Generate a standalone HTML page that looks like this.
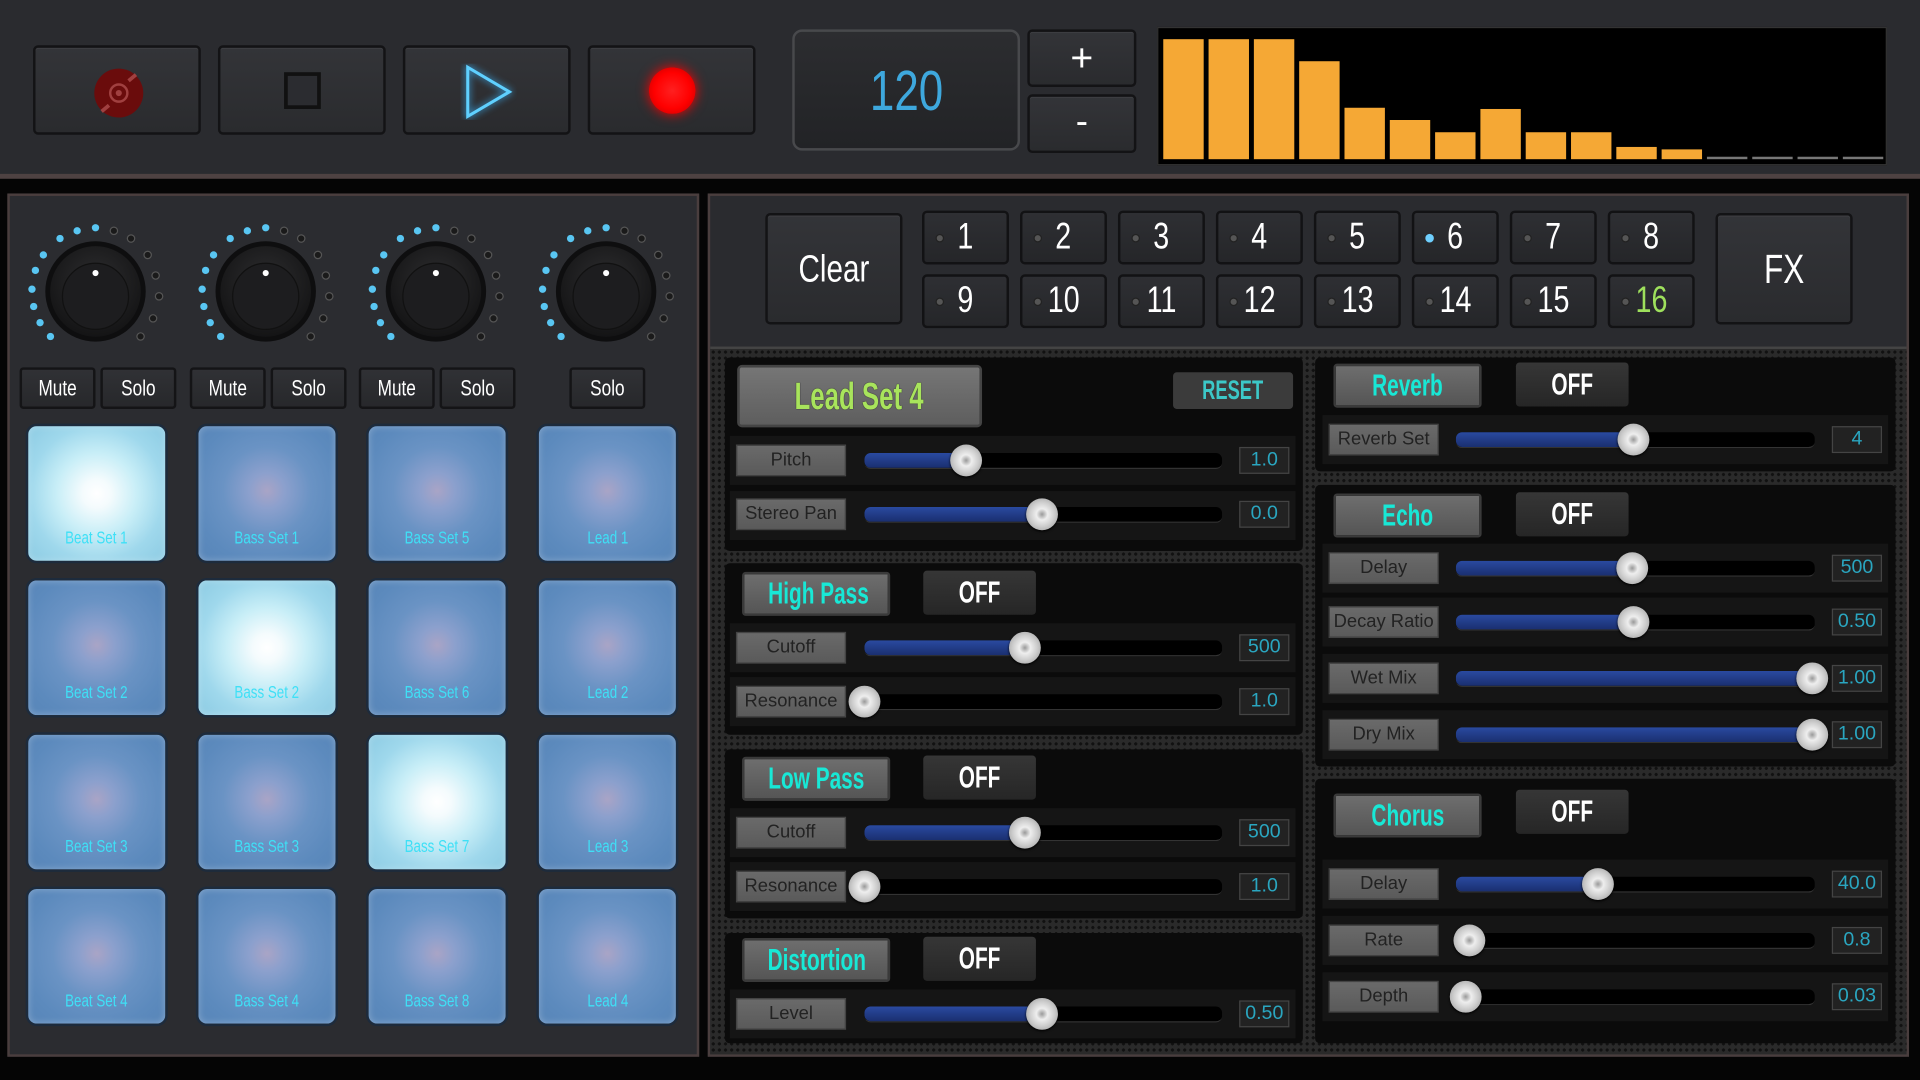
<!DOCTYPE html>
<html><head><meta charset="utf-8"><style>
*{box-sizing:border-box;margin:0;padding:0}
html,body{width:1920px;height:1080px;overflow:hidden;background:#000;font-family:"Liberation Sans",sans-serif}
#s{position:absolute;left:0;top:0;width:1568px;height:882px;transform:scale(1.22449);transform-origin:0 0;background:#050505}
.a{position:absolute}
.n{display:inline-block;transform:scaleX(.78)}
.nb{display:inline-block;transform:scaleX(.68)}
.btn{position:absolute;background:linear-gradient(#333438,#2a2b2e);border:2px solid #131315;border-radius:4px;box-shadow:inset 0 1px 0 #3c3d41}
.ms{position:absolute;top:300px;height:34px;width:62px;background:linear-gradient(#303135,#27282b);border:2px solid #141416;border-radius:3px;color:#fff;font-size:18px;line-height:30px;text-align:center}
.pad{position:absolute;width:116px;height:114px;border:2px solid #1d2b3c;border-radius:9px;background:radial-gradient(circle at 50% 48%,#a9a4c6 0,#8ca0cd 18%,#6a93c4 45%,#5c8abd 75%,#5785b8);color:#3fe0f6;font-size:14px;text-align:center;padding-top:83px;box-shadow:inset 0 0 6px rgba(255,255,255,.3)}
.pad.on{background:radial-gradient(circle at 50% 50%,#fff 0,#f4fbfd 15%,#c8eef7 42%,#9fd8ec 70%,#8ccbe3)}
.st{position:absolute;width:71px;height:44px;background:linear-gradient(#2e2f33,#252629);border:2px solid #121214;border-radius:4px;color:#fff;font-size:30px;text-align:center;line-height:40px}
.st i{position:absolute;left:9px;top:17px;width:7px;height:7px;border-radius:50%;background:#555;border:1px solid #222}
.sec{position:absolute;background:#0b0b0b;border-radius:4px}
.band{position:absolute;background:#151515}
.hd{position:absolute;height:36px;width:121px;background:linear-gradient(#6e6e6e,#555);border:2px solid #3a3a3a;border-radius:3px;color:#18e8d6;font-weight:bold;font-size:25px;text-align:center;line-height:32px;white-space:nowrap}
.off{position:absolute;height:36px;width:92px;background:linear-gradient(#363636,#262626);border-radius:3px;color:#fff;font-weight:bold;font-size:25px;text-align:center;line-height:36px}
.sl{position:absolute;width:452px;height:26px}
.sl .lb{position:absolute;left:0;top:0;width:90px;height:26px;background:linear-gradient(#6a6a6a,#5a5a5a);border:1px solid #444;color:#222;font-size:15px;text-align:center;line-height:24px;white-space:nowrap;overflow:hidden}
.sl .tr{position:absolute;left:105px;top:7px;width:292px;height:13px;background:#000;border-radius:5px;border-bottom:1px solid #333}
.sl .fl{position:absolute;left:0;top:0;height:12px;background:linear-gradient(#2a4aa0,#1a2f70);border-radius:5px}
.sl .th{position:absolute;top:0;width:26px;height:26px;border-radius:50%;background:radial-gradient(circle at 50% 50%,#999 0,#eee 25%,#ccc 55%,#aaa 80%,#888);box-shadow:0 1px 2px #000}
.sl .vb{position:absolute;left:411px;top:2px;width:41px;height:22px;background:#222;border:1px solid #444;color:#2aa6c0;font-size:16px;text-align:center;line-height:20px}
.dot{background-color:#2a2a2a;background-image:radial-gradient(#111 1.2px,transparent 1.4px);background-size:5px 5px}
</style></head><body><div id="s">

<div class="a" style="left:0;top:0;width:1568px;height:144px;background:#2a2b2f"></div>
<div class="a" style="left:0;top:142px;width:1568px;height:4px;background:#4e4242"></div>

<div class="btn" style="left:27px;top:37px;width:137px;height:73px"><svg class="a" style="left:46px;top:15px" width="44" height="44" viewBox="0 0 44 44"><circle cx="22" cy="22" r="20" fill="#6a0c0c"/><circle cx="22" cy="22" r="7" fill="none" stroke="#a04040" stroke-width="2"/><circle cx="22" cy="22" r="2.5" fill="#a04040"/><path d="M30 12l6-5M14 32l-6 5" stroke="#a04040" stroke-width="3"/></svg></div>
<div class="btn" style="left:178px;top:37px;width:137px;height:73px"><div class="a" style="left:52px;top:20px;width:30px;height:30px;border:3px solid #111;background:#2b2c30"></div></div>
<div class="btn" style="left:329px;top:37px;width:137px;height:73px"><svg class="a" style="left:45px;top:13px" width="46" height="46" viewBox="0 0 46 46"><path d="M6 3L40 23L6 43Z" fill="none" stroke="#5fd0ff" stroke-width="2.5" style="filter:drop-shadow(0 0 3px #3ab6ff)"/></svg></div>
<div class="btn" style="left:480px;top:37px;width:137px;height:73px"><div class="a" style="left:48px;top:16px;width:38px;height:38px;border-radius:50%;background:radial-gradient(circle,#ff2020 0,#ff0000 55%,#b00 100%);box-shadow:0 0 10px #f00"></div></div>

<div class="a" style="left:647px;top:24px;width:186px;height:99px;background:linear-gradient(#2c2d30,#222326);border:2px solid #48494c;border-radius:8px;color:#3ea8dd;font-size:46px;text-align:center;line-height:96px"><span class="n">120</span></div>
<div class="btn" style="left:839px;top:24px;width:89px;height:47px;color:#fff;font-size:32px;text-align:center;line-height:42px">+</div>
<div class="btn" style="left:839px;top:77px;width:89px;height:48px;color:#fff;font-size:30px;text-align:center;line-height:42px">-</div>

<div class="a" style="left:945px;top:22px;width:596px;height:113px;background:#000;border:1px solid #333"></div>
<div class="a" style="left:950px;top:32px;width:33px;height:98px;background:#f5a835"></div>
<div class="a" style="left:987px;top:32px;width:33px;height:98px;background:#f5a835"></div>
<div class="a" style="left:1024px;top:32px;width:33px;height:98px;background:#f5a835"></div>
<div class="a" style="left:1061px;top:50px;width:33px;height:80px;background:#f5a835"></div>
<div class="a" style="left:1098px;top:88px;width:33px;height:42px;background:#f5a835"></div>
<div class="a" style="left:1135px;top:98px;width:33px;height:32px;background:#f5a835"></div>
<div class="a" style="left:1172px;top:108px;width:33px;height:22px;background:#f5a835"></div>
<div class="a" style="left:1209px;top:89px;width:33px;height:41px;background:#f5a835"></div>
<div class="a" style="left:1246px;top:108px;width:33px;height:22px;background:#f5a835"></div>
<div class="a" style="left:1283px;top:108px;width:33px;height:22px;background:#f5a835"></div>
<div class="a" style="left:1320px;top:120px;width:33px;height:10px;background:#f5a835"></div>
<div class="a" style="left:1357px;top:122px;width:33px;height:8px;background:#f5a835"></div>
<div class="a" style="left:1394px;top:128px;width:33px;height:2px;background:#777"></div>
<div class="a" style="left:1431px;top:128px;width:33px;height:2px;background:#777"></div>
<div class="a" style="left:1468px;top:128px;width:33px;height:2px;background:#777"></div>
<div class="a" style="left:1505px;top:128px;width:33px;height:2px;background:#777"></div>

<div class="a" style="left:6px;top:158px;width:565px;height:705px;background:#2b2c30;border:2px solid #4a3e3e"></div>
<svg class="a" style="left:0;top:160px" width="570" height="140" viewBox="0 160 570 140">
<defs><radialGradient id="kg" cx="50%" cy="40%" r="60%"><stop offset="0" stop-color="#2e2e30"/><stop offset="1" stop-color="#141415"/></radialGradient>
<g id="kn"><circle r="41" fill="#0e0e0f"/><circle r="37" fill="url(#kg)"/><circle cy="4" r="27" fill="#1d1d1f" stroke="#111"/><circle cy="-15" r="2.5" fill="#fff"/>
<g fill="#59c6f2"><circle cx="-36.8" cy="36.8" r="3"/><circle cx="-45.3" cy="25.5" r="3"/><circle cx="-50.5" cy="12.3" r="3"/><circle cx="-51.9" cy="-1.8" r="3"/><circle cx="-49.1" cy="-17.2" r="3"/><circle cx="-42.6" cy="-29.8" r="3"/><circle cx="-29" cy="-43.2" r="3"/><circle cx="0" cy="-52" r="3"/><circle cx="-15" cy="-49.5" r="3"/></g>
<g fill="#1a1a1a" stroke="#555" stroke-width="1"><circle cx="15" cy="-49.5" r="3"/><circle cx="29" cy="-43.2" r="3"/><circle cx="42.6" cy="-29.8" r="3"/><circle cx="49.1" cy="-13" r="3"/><circle cx="51.9" cy="4" r="3"/><circle cx="47" cy="22" r="3"/><circle cx="36.8" cy="36.8" r="3"/></g></g></defs>
<use href="#kn" x="78" y="238"/><use href="#kn" x="217" y="238"/><use href="#kn" x="356" y="238"/><use href="#kn" x="495" y="238"/>
</svg>
<div class="ms" style="left:16px"><span class="n">Mute</span></div><div class="ms" style="left:82px"><span class="n">Solo</span></div>
<div class="ms" style="left:155px"><span class="n">Mute</span></div><div class="ms" style="left:221px"><span class="n">Solo</span></div>
<div class="ms" style="left:293px"><span class="n">Mute</span></div><div class="ms" style="left:359px"><span class="n">Solo</span></div>
<div class="ms" style="left:465px"><span class="n">Solo</span></div>

<div class="pad on" style="left:21px;top:346px"><span class="n">Beat Set 1</span></div>
<div class="pad" style="left:160px;top:346px"><span class="n">Bass Set 1</span></div>
<div class="pad" style="left:299px;top:346px"><span class="n">Bass Set 5</span></div>
<div class="pad" style="left:438px;top:346px"><span class="n">Lead 1</span></div>
<div class="pad" style="left:21px;top:472px"><span class="n">Beat Set 2</span></div>
<div class="pad on" style="left:160px;top:472px"><span class="n">Bass Set 2</span></div>
<div class="pad" style="left:299px;top:472px"><span class="n">Bass Set 6</span></div>
<div class="pad" style="left:438px;top:472px"><span class="n">Lead 2</span></div>
<div class="pad" style="left:21px;top:598px"><span class="n">Beat Set 3</span></div>
<div class="pad" style="left:160px;top:598px"><span class="n">Bass Set 3</span></div>
<div class="pad on" style="left:299px;top:598px"><span class="n">Bass Set 7</span></div>
<div class="pad" style="left:438px;top:598px"><span class="n">Lead 3</span></div>
<div class="pad" style="left:21px;top:724px"><span class="n">Beat Set 4</span></div>
<div class="pad" style="left:160px;top:724px"><span class="n">Bass Set 4</span></div>
<div class="pad" style="left:299px;top:724px"><span class="n">Bass Set 8</span></div>
<div class="pad" style="left:438px;top:724px"><span class="n">Lead 4</span></div>

<div class="a" style="left:578px;top:158px;width:981px;height:705px;background:#2a2b2f;border:2px solid #4a3e3e"></div>
<div class="a dot" style="left:580px;top:283px;width:977px;height:578px;border-top:2px solid #444"></div>
<div class="btn" style="left:625px;top:174px;width:112px;height:91px;color:#fff;font-size:31px;text-align:center;line-height:87px"><span class="n">Clear</span></div>
<div class="st" style="left:753px;top:172px"><i></i><span class="n">1</span></div><div class="st" style="left:833px;top:172px"><i></i><span class="n">2</span></div><div class="st" style="left:913px;top:172px"><i></i><span class="n">3</span></div><div class="st" style="left:993px;top:172px"><i></i><span class="n">4</span></div><div class="st" style="left:1073px;top:172px"><i></i><span class="n">5</span></div><div class="st" style="left:1153px;top:172px"><i style="background:#6fd0ff;border-color:#6fd0ff"></i><span class="n">6</span></div><div class="st" style="left:1233px;top:172px"><i></i><span class="n">7</span></div><div class="st" style="left:1313px;top:172px"><i></i><span class="n">8</span></div>
<div class="st" style="left:753px;top:224px"><i></i><span class="n">9</span></div><div class="st" style="left:833px;top:224px"><i></i><span class="n">10</span></div><div class="st" style="left:913px;top:224px"><i></i><span class="n">11</span></div><div class="st" style="left:993px;top:224px"><i></i><span class="n">12</span></div><div class="st" style="left:1073px;top:224px"><i></i><span class="n">13</span></div><div class="st" style="left:1153px;top:224px"><i></i><span class="n">14</span></div><div class="st" style="left:1233px;top:224px"><i></i><span class="n">15</span></div><div class="st" style="left:1313px;top:224px;color:#9ee05c"><i></i><span class="n">16</span></div>
<div class="btn" style="left:1401px;top:174px;width:112px;height:91px;color:#fff;font-size:33px;text-align:center;line-height:87px"><span class="n">FX</span></div>

<div class="sec" style="left:592px;top:292px;width:472px;height:158px"></div>
<div class="sec" style="left:592px;top:460px;width:472px;height:140px"></div>
<div class="sec" style="left:592px;top:612px;width:472px;height:138px"></div>
<div class="sec" style="left:592px;top:762px;width:472px;height:90px"></div>
<div class="sec" style="left:1074px;top:292px;width:474px;height:93px"></div>
<div class="sec" style="left:1074px;top:396px;width:474px;height:230px"></div>
<div class="sec" style="left:1074px;top:636px;width:474px;height:216px"></div>

<div class="band" style="left:596px;top:356px;width:462px;height:40px"></div>
<div class="band" style="left:596px;top:401px;width:462px;height:40px"></div>
<div class="band" style="left:596px;top:509px;width:462px;height:40px"></div>
<div class="band" style="left:596px;top:553px;width:462px;height:40px"></div>
<div class="band" style="left:596px;top:660px;width:462px;height:40px"></div>
<div class="band" style="left:596px;top:704px;width:462px;height:40px"></div>
<div class="band" style="left:596px;top:808px;width:462px;height:40px"></div>
<div class="band" style="left:1080px;top:339px;width:462px;height:40px"></div>
<div class="band" style="left:1080px;top:444px;width:462px;height:40px"></div>
<div class="band" style="left:1080px;top:488px;width:462px;height:40px"></div>
<div class="band" style="left:1080px;top:534px;width:462px;height:40px"></div>
<div class="band" style="left:1080px;top:580px;width:462px;height:40px"></div>
<div class="band" style="left:1080px;top:702px;width:462px;height:40px"></div>
<div class="band" style="left:1080px;top:748px;width:462px;height:40px"></div>
<div class="band" style="left:1080px;top:794px;width:462px;height:40px"></div>

<div class="a" style="left:602px;top:298px;width:200px;height:51px;background:linear-gradient(#767676,#5e5e5e);border:2px solid #444;border-radius:4px;color:#a8e45c;font-weight:bold;font-size:31px;text-align:center;line-height:47px;text-shadow:0 0 1px #000;white-space:nowrap"><span class="nb">Lead Set 4</span></div>
<div class="a" style="left:958px;top:304px;width:98px;height:30px;background:#3b3b3b;border-radius:3px;color:#3cc8c8;font-weight:bold;font-size:22px;text-align:center;line-height:30px"><span class="nb">RESET</span></div>

<div class="hd" style="left:606px;top:467px"><span class="nb">High Pass</span></div><div class="off" style="left:754px;top:466px"><span class="nb">OFF</span></div>
<div class="hd" style="left:606px;top:618px"><span class="nb">Low Pass</span></div><div class="off" style="left:754px;top:617px"><span class="nb">OFF</span></div>
<div class="hd" style="left:606px;top:766px"><span class="nb">Distortion</span></div><div class="off" style="left:754px;top:765px"><span class="nb">OFF</span></div>
<div class="hd" style="left:1089px;top:297px"><span class="nb">Reverb</span></div><div class="off" style="left:1238px;top:296px"><span class="nb">OFF</span></div>
<div class="hd" style="left:1089px;top:403px"><span class="nb">Echo</span></div><div class="off" style="left:1238px;top:402px"><span class="nb">OFF</span></div>
<div class="hd" style="left:1089px;top:648px"><span class="nb">Chorus</span></div><div class="off" style="left:1238px;top:645px"><span class="nb">OFF</span></div>

<div class="sl" style="left:601px;top:363px"><div class="lb">Pitch</div><div class="tr"><div class="fl" style="width:83px"></div></div><div class="th" style="left:175px"></div><div class="vb">1.0</div></div>
<div class="sl" style="left:601px;top:407px"><div class="lb">Stereo Pan</div><div class="tr"><div class="fl" style="width:145px"></div></div><div class="th" style="left:237px"></div><div class="vb">0.0</div></div>
<div class="sl" style="left:601px;top:516px"><div class="lb">Cutoff</div><div class="tr"><div class="fl" style="width:131px"></div></div><div class="th" style="left:223px"></div><div class="vb">500</div></div>
<div class="sl" style="left:601px;top:560px"><div class="lb">Resonance</div><div class="tr"></div><div class="th" style="left:92px"></div><div class="vb">1.0</div></div>
<div class="sl" style="left:601px;top:667px"><div class="lb">Cutoff</div><div class="tr"><div class="fl" style="width:131px"></div></div><div class="th" style="left:223px"></div><div class="vb">500</div></div>
<div class="sl" style="left:601px;top:711px"><div class="lb">Resonance</div><div class="tr"></div><div class="th" style="left:92px"></div><div class="vb">1.0</div></div>
<div class="sl" style="left:601px;top:815px"><div class="lb">Level</div><div class="tr"><div class="fl" style="width:145px"></div></div><div class="th" style="left:237px"></div><div class="vb">0.50</div></div>

<div class="sl" style="left:1085px;top:346px"><div class="lb">Reverb Set</div><div class="tr" style="left:104px;width:293px"><div class="fl" style="width:145px"></div></div><div class="th" style="left:236px"></div><div class="vb">4</div></div>
<div class="sl" style="left:1085px;top:451px"><div class="lb">Delay</div><div class="tr" style="left:104px;width:293px"><div class="fl" style="width:144px"></div></div><div class="th" style="left:235px"></div><div class="vb">500</div></div>
<div class="sl" style="left:1085px;top:495px"><div class="lb">Decay Ratio</div><div class="tr" style="left:104px;width:293px"><div class="fl" style="width:145px"></div></div><div class="th" style="left:236px"></div><div class="vb">0.50</div></div>
<div class="sl" style="left:1085px;top:541px"><div class="lb">Wet Mix</div><div class="tr" style="left:104px;width:293px"><div class="fl" style="width:291px"></div></div><div class="th" style="left:382px"></div><div class="vb">1.00</div></div>
<div class="sl" style="left:1085px;top:587px"><div class="lb">Dry Mix</div><div class="tr" style="left:104px;width:293px"><div class="fl" style="width:291px"></div></div><div class="th" style="left:382px"></div><div class="vb">1.00</div></div>
<div class="sl" style="left:1085px;top:709px"><div class="lb">Delay</div><div class="tr" style="left:104px;width:293px"><div class="fl" style="width:116px"></div></div><div class="th" style="left:207px"></div><div class="vb">40.0</div></div>
<div class="sl" style="left:1085px;top:755px"><div class="lb">Rate</div><div class="tr" style="left:104px;width:293px"><div class="fl" style="width:11px"></div></div><div class="th" style="left:102px"></div><div class="vb">0.8</div></div>
<div class="sl" style="left:1085px;top:801px"><div class="lb">Depth</div><div class="tr" style="left:104px;width:293px"><div class="fl" style="width:8px"></div></div><div class="th" style="left:99px"></div><div class="vb">0.03</div></div>

</div></body></html>
